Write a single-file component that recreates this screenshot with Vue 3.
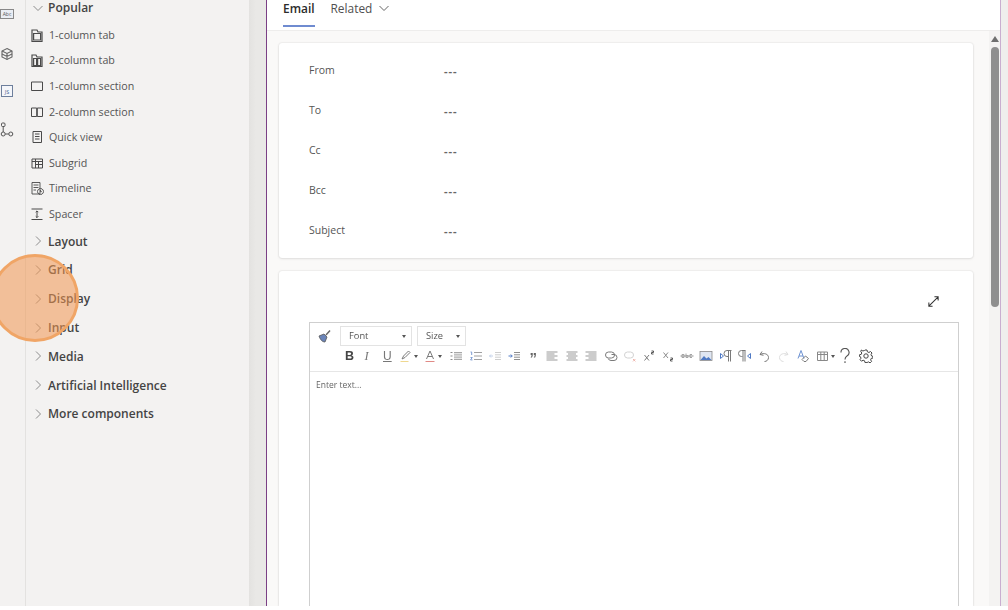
<script setup>
const items = [
  { t: '1-column tab', d: ['M2 4V2h5l1 2h4v9.500H2z', 'M3.600 5.500h7v6.500h-7z'], w: 1.200 },
  { t: '2-column tab', d: ['M2 4V2h4l1 2h5v9.500H2z', 'M3.600 5.500h3v7h-3zM7.600 5.500h3v7h-3z'], w: 1.200 },
  { t: '1-column section', d: ['M1.500 3h11v8.500h-11z'], w: 1 },
  { t: '2-column section', d: ['M1.500 3h5.200v8.500H1.500zM7.300 3h5.200v8.500H7.300z'], w: 1 },
  { t: 'Quick view', d: ['M3 1.500h8.500v11H3z', 'M5 4h4.500M5 6.500h4.500M5 9h4.500'], w: 1 },
  { t: 'Subgrid', d: ['M2 3h10.500v9H2z', 'M2 5.500h10.500M5.500 3v9M8.500 5.500V12M5.500 8.500h7'], w: 1 },
  { t: 'Timeline', d: ['M2 1.500h8v11.500H2z', 'M3.500 4h5M3.500 6.500h5M3.500 9h2.500', 'M10.500 7.500a3 3 0 1 0 .01 0zM10.500 9v1.600h1.300'], w: .9 },
  { t: 'Spacer', d: ['M1.500 2h11M1.500 12.500h11', 'M7 4v6.500M5.700 5.200L7 3.900l1.300 1.300M5.700 9.300L7 10.600l1.300-1.300'], w: 1 }
]
const groups = ['Layout', 'Grid', 'Display', 'Input', 'Media', 'Artificial Intelligence', 'More components']
const fields = ['From', 'To', 'Cc', 'Bcc', 'Subject']
const g = '#7a7a7a'
const tools = [
  { k: 't', t: 'B', c: 'bold' }, { k: 't', t: 'I', c: 'ital' }, { k: 't', t: 'U', c: 'under', w: 17.500 },
  { k: 'p', w: 24, caret: 1, p: [['M3 10l1.500-3L9.500 2l1.500 1.500L6 8.500z', g], ['M1.500 12.500h8', '#efd890']] },
  { k: 'p', w: 26, caret: 1, p: [['M3.500 10L7 2l3.500 8M5 7.500h4', g], ['M2.500 12.500h9', '#e08a86']] },
  { k: 'p', w: 20, p: [['M1.500 3.500h2M1.500 7h2M1.500 10.500h2', '#8b8b8b'], ['M5 3.500h8M5 5.200h8M5 7h8M5 8.800h8M5 10.500h8', '#a8a8a8']] },
  { k: 'p', w: 19, p: [['M1.500 3h1.200v3M1.500 8.500h1.800l-1.800 2.400h2', '#7f9dd2'], ['M5 3.500h8M5 7h8M5 10.500h8', '#a0a0a0']] },
  { k: 'p', w: 19, p: [['M5 7H1.500M3 5.500L1.500 7 3 8.500', '#c3d0e8'], ['M7 3.500h6M7 5.800h6M7 8.200h6M7 10.500h6', '#cecece']] },
  { k: 'p', w: 19, p: [['M1.500 7H5M3.800 5.500L5.300 7 3.800 8.500', '#4f79c4'], ['M7 3.500h6M7 5.800h6M7 8.200h6M7 10.500h6', '#8f8f8f']] },
  { k: 't', t: '”', c: 'quote', w: 19 },
  { k: 'p', w: 20, p: [['M1.500 3h11M1.500 5h8M1.500 7h11M1.500 9h8M1.500 11h11', '#999']] },
  { k: 'p', w: 19.500, p: [['M1.500 3h11M3 5h8M1.500 7h11M3 9h8M1.500 11h11', '#999']] },
  { k: 'p', w: 19.500, p: [['M1.500 3h11M4.500 5h8M1.500 7h11M4.500 9h8M1.500 11h11', '#999']] },
  { k: 'p', w: 19, p: [['M4.500 3h3a3 3 0 0 1 0 6h-3a3 3 0 0 1 0-6z', g], ['M7.500 5.500h2.500a3 3 0 0 1 0 6H7a3 3 0 0 1-2.800-2', g]] },
  { k: 'p', w: 19, p: [['M4.500 3h3a3 3 0 0 1 0 6h-3a3 3 0 0 1 0-6z', '#d2d2d2'], ['M10 10l2.400 2.400M12.400 10L10 12.400', '#eeb5ad']] },
  { k: 'p', w: 19, p: [['M2.500 6l4.500 5.500M7 6l-4.500 5.500', g], ['M9.500 2h2v1.500h-2V5h2', '#555']] },
  { k: 'p', w: 19, p: [['M2.500 3.500l4.500 5.500M7 3.500L2.500 9', '#8a8a8a'], ['M9.500 9h2v1.500h-2V12h2', '#555']] },
  { k: 'p', w: 19.500, p: [['M0.500 7h13', '#8f8f8f'], ['M2 8.500V5.500h2v3H2M6 4.500v4h2v-2H6M12 5.500h-2v3h2', '#a4a4a4']] },
  { k: 'img', w: 20 },
  { k: 'p', w: 19, p: [['M1.500 4.500v5L4.500 7z', '#4f79c4'], ['M9 7.500H8a3 3 0 0 1 0-6h4.500M9.500 1.500v11M11.500 1.500v11', g]] },
  { k: 'p', w: 19, p: [['M12.500 4.500v5L9.500 7z', '#4f79c4'], ['M4.500 7.500H3.500a3 3 0 0 1 0-6H7.500M5 1.500v11M7 1.500v11', g]] },
  { k: 'p', w: 19.500, p: [['M3 5.500l2-3M3 5.500l3.500.8M3.200 5.500C7 3.500 11.500 5 11.500 8.500c0 2.500-2 4-4 4', '#777']] },
  { k: 'p', w: 19, p: [['M11 5.500l-2-3M11 5.500l-3.500.8M10.800 5.500C7 3.500 2.500 5 2.500 8.500c0 2.500 2 4 4 4', '#dcdcdc']] },
  { k: 'p', w: 20, p: [['M2 9.500L5 1.500l3 8M3 7h4', '#6f93d2'], ['M6 10.500l3.500-3.500 3 2.500-2.500 3H8z', g]] },
  { k: 'p', w: 22, caret: 1, p: [['M1.500 3h10v8.500h-10zM1.500 5.500h10M4.800 3v8.500M8.200 3v8.500', '#888']] },
  { k: 'p', w: 21, tall: 1, p: [['M3.500 4a3.500 3.500 0 1 1 5.200 3c-1.200.7-1.700 1.500-1.700 3M7 11.500v1.500', '#555']] },
  { k: 'gear', w: 20 }
]
</script>

<template>
  <div class="page">
    <nav class="rail">
      <div class="rail-ico abc"><span>Abc</span></div>
      <svg class="rail-ico cube" width="14" height="14" viewBox="0 0 14 14" fill="none" stroke="#666" stroke-width="1.100"><path d="M7 1.500l5 2.500v6l-5 2.500L2 10V4z" /><path d="M2 4l5 2.500L12 4M2 7l5 2.500L12 7M7 6.500v6" /></svg>
      <div class="rail-ico js"><span>JS</span></div>
      <svg class="rail-ico flow" width="14" height="16" viewBox="0 0 14 16" fill="none" stroke="#555" stroke-width="1"><rect x="1.500" y="1" width="3.500" height="3.500" rx="1" /><circle cx="3.200" cy="12" r="2" /><circle cx="10.800" cy="12" r="2" /><path d="M3.200 4.500V10M5.200 12h3.600" /></svg>
    </nav>

    <aside class="panel">
      <div class="head popular">
        <svg class="chev" width="12" height="12" viewBox="0 0 12 12"><path d="M1.500 4l4.500 4.500L10.500 4" /></svg>
        <span>Popular</span>
      </div>
      <div class="item" v-for="it in items" :key="it.t">
        <svg width="14" height="14" viewBox="0 0 14 14" fill="none" stroke="#4a4a4a" :stroke-width="it.w">
          <path v-for="d in it.d" :key="d" :d="d" />
        </svg>
        <span>{{ it.t }}</span>
      </div>
      <div class="head group" v-for="h in groups" :key="h">
        <svg class="chev" width="12" height="12" viewBox="0 0 12 12"><path d="M4 1.500L8.500 6 4 10.500" /></svg>
        <span>{{ h }}</span>
      </div>
    </aside>

    <div class="gutter"></div>

    <main class="main">
      <header class="tabs">
        <div class="tab active">Email</div>
        <div class="tab">Related
          <svg width="12" height="12" viewBox="0 0 12 12" fill="none" stroke="#666" stroke-width="1"><path d="M1.500 4l4.500 4.500L10.500 4" /></svg>
        </div>
      </header>
      <div class="body">
        <div class="cards">
          <section class="card fields">
            <div class="row" v-for="f in fields" :key="f">
              <span class="lbl">{{ f }}</span><span class="val">---</span>
            </div>
          </section>
          <section class="card editor-card">
            <div class="expand">
              <svg width="13" height="13" viewBox="0 0 14 14" fill="none" stroke="#333" stroke-width="1.100"><path d="M2.500 11.500l9-9M8 2h4v4M2 8v4h4" /></svg>
            </div>
            <div class="editor">
              <div class="tb">
                <div class="tb-top">
                  <svg class="brush" width="16" height="16" viewBox="0 0 16 16"><path d="M2 8l5-2 3 3-2 5C5 14 3 11 2 8z" fill="#6a84b8" stroke="#555" stroke-width=".8" /><path d="M9 7l4-4.500" stroke="#666" stroke-width="1.500" /></svg>
                  <div class="sel font">Font<i></i></div>
                  <div class="sel size">Size<i></i></div>
                </div>
                <div class="tb-icons">
                  <div class="tool" v-for="(t, i) in tools" :key="i" :style="{ width: (t.w || 19.500) + 'px' }">
                    <span v-if="t.k === 't'" :class="t.c">{{ t.t }}</span>
                    <svg v-else-if="t.k === 'p'" width="14" height="14" viewBox="0 0 14 14" fill="none" stroke-width="1" :class="{ tall: t.tall }">
                      <path v-for="p in t.p" :key="p[0]" :d="p[0]" :stroke="p[1]" />
                    </svg>
                    <svg v-else-if="t.k === 'img'" width="14" height="14" viewBox="0 0 14 14"><rect x="1" y="2.500" width="12" height="9" fill="#dfe6f2" stroke="#8a8a8a" stroke-width=".8" /><path d="M1.500 11l3.500-4 2.500 2.500L9.500 8l3 3z" fill="#4f79c4" /></svg>
                    <svg v-else width="14" height="14" viewBox="0 0 14 14" fill="none" stroke="#444" stroke-width="1"><circle cx="7" cy="7" r="2.200" /><path d="M6 1h2l.4 1.800 1.500.7L11.500 2.500 13 4l-1 1.600.6 1.400 1.400.4v1.600l-1.800.4-.6 1.500 1 1.500-1.500 1.500-1.600-1-1.400.6L8 13.600H6l-.4-1.800-1.500-.6-1.600 1L1 10.700l1-1.500-.6-1.500L.4 7.400V5.800l1.800-.4.6-1.400-1-1.500L2.300 1l1.600 1 1.700-.6z" /></svg>
                    <i v-if="t.caret" class="caret"></i>
                  </div>
                </div>
              </div>
              <div class="enter">Enter text...</div>
            </div>
          </section>
        </div>
        <div class="scrollbar">
          <div class="arrow"></div>
          <div class="thumb"></div>
        </div>
      </div>
    </main>
    <div class="edge"></div>

    <div class="spot"></div>
  </div>
</template>

<style>
html, body { margin: 0; background: #fff; }
</style>

<style scoped>
.page {
  position: relative;
  display: flex;
  width: 1008px;
  height: 606px;
  overflow: hidden;
  font-family: "Open Sans", "Noto Sans", sans-serif;
  color: #333;
  filter: blur(0.45px);
}
.rail {
  width: 25px;
  flex: none;
  background: #f3f2f1;
  border-right: 1px solid #e3e2e0;
  display: flex;
  flex-direction: column;
  align-items: flex-start;
}
.rail-ico { flex: none; }
.abc {
  margin-top: 9px;
  width: 12px;
  height: 8px;
  border: 1px solid #888;
  background: #e9edf3;
  font-size: 5px;
  line-height: 8px;
  text-align: center;
  color: #555;
}
.cube { margin-top: 28px; }
.js {
  margin: 24px 0 0 1px;
  width: 10px;
  height: 10px;
  border: 1px solid #6d7f9c;
  background: #f4f6fa;
  font-size: 5.500px;
  line-height: 13px;
  text-align: center;
  color: #44628f;
}
.flow { margin-top: 25px; }
.panel {
  width: 223px;
  flex: none;
  background: #f3f2f1;
  padding-left: 6px;
  box-sizing: border-box;
}
.head {
  display: flex;
  align-items: center;
  gap: 4px;
  font-size: 12px;
  font-weight: 600;
  color: #444;
}
.chev { fill: none; stroke: #808080; stroke-width: .9; flex: none; }
.popular { height: 15px; line-height: 15px; margin-bottom: 7px; }
.group { height: 28.800px; }
.item {
  display: flex;
  align-items: center;
  gap: 5px;
  height: 25.600px;
  margin-left: -2px;
  font-size: 10.700px;
  color: #555;
}
.gutter {
  width: 17px;
  flex: none;
  background: linear-gradient(90deg, #e3e2e0, #e9e8e6 40%);
}
.main {
  width: 735px;
  flex: none;
  border-left: 1px solid #7b3f85;
  border-right: 1px solid #c9aed0;
  box-sizing: border-box;
  background: #faf9f8;
  display: flex;
  flex-direction: column;
}
.tabs {
  height: 31px;
  flex: none;
  box-sizing: border-box;
  background: #fff;
  border-bottom: 1px solid #eeedec;
  display: flex;
  gap: 16px;
  padding-left: 16px;
}
.tab {
  height: 27px;
  font-size: 11.900px;
  line-height: 16px;
  color: #505050;
  display: flex;
  gap: 6px;
  align-items: flex-start;
}
.tab svg { margin-top: 2px; }
.active {
  font-weight: 600;
  color: #2b2b2b;
  border-bottom: 2px solid #6f8bd0;
  height: 25px;
}
.body {
  flex: 1;
  min-height: 0;
  display: flex;
}
.cards {
  width: 694px;
  margin-left: 12px;
  padding-top: 12px;
  flex: none;
  display: flex;
  flex-direction: column;
  gap: 13px;
}
.card {
  background: #fff;
  border-radius: 3px;
  box-shadow: 0 0 2px rgba(0, 0, 0, .14), 0 1px 3px rgba(0, 0, 0, .08);
}
.fields {
  height: 215px;
  box-sizing: border-box;
  padding: 7px 0 0 30px;
}
.row {
  height: 40px;
  display: flex;
  align-items: center;
}
.lbl {
  width: 135px;
  font-size: 10.500px;
  color: #555;
  margin-top: -1px;
}
.val {
  font-size: 11px;
  font-weight: 700;
  color: #666;
  letter-spacing: 1px;
  margin-top: 1px;
}
.editor-card {
  flex: 1;
  min-height: 0;
  padding: 0 14px 0 30px;
  border-radius: 3px 3px 0 0;
}
.expand {
  display: flex;
  justify-content: flex-end;
  align-items: flex-end;
  padding-right: 19px;
  box-sizing: border-box;
  height: 37px;
  margin-bottom: 14px;
}
.editor {
  height: 300px;
  border: 1px solid #cfcfcf;
  border-bottom: none;
  box-sizing: border-box;
}
.tb {
  height: 49px;
  border-bottom: 1px solid #e6e6e6;
  box-sizing: border-box;
  padding: 3px 0 0 7px;
}
.tb-top {
  display: flex;
  align-items: center;
  height: 20px;
}
.brush { margin-right: 7px; }
.sel {
  height: 20px;
  box-sizing: border-box;
  border: 1px solid #e3e3e3;
  font-size: 9.300px;
  line-height: 18px;
  padding-left: 8px;
  color: #555;
  position: relative;
}
.sel i {
  position: absolute;
  right: 5px;
  top: 8px;
  border: 2px solid transparent;
  border-top: 3px solid #555;
  border-bottom: none;
}
.font { width: 72px; margin-right: 5px; }
.size { width: 49px; }
.tb-icons {
  display: flex;
  align-items: center;
  height: 20px;
  padding-left: 25px;
}
.tool {
  flex: none;
  height: 20px;
  display: flex;
  align-items: center;
  position: relative;
  font-family: "Liberation Sans", sans-serif;
}
.caret {
  position: absolute;
  left: 15px;
  top: 9px;
  border: 2px solid transparent;
  border-top: 3px solid #555;
  border-bottom: none;
}
.bold { font-weight: 700; font-size: 12.500px; color: #444; margin-left: 3px; }
.ital { font-style: italic; font-size: 12.500px; color: #777; font-family: "Liberation Serif", serif; margin-left: 3px; }
.under { text-decoration: underline; font-size: 12px; color: #777; margin-left: 2px; }
.quote { font-weight: 700; font-size: 15px; color: #666; line-height: 20px; margin: 4px 0 0 4px; }
.tall { transform: scale(1.150); }
.enter {
  padding: 7px 0 0 6px;
  font-size: 8.500px;
  line-height: 12px;
  color: #666;
}
.scrollbar {
  width: 11px;
  margin-left: 16px;
  background: #f4f3f2;
  flex: none;
  display: flex;
  flex-direction: column;
  align-items: center;
  padding-top: 5px;
}
.arrow {
  border: 4px solid transparent;
  border-bottom: 6px solid #6f6f6f;
  border-top: none;
}
.thumb {
  margin-top: 5px;
  width: 8px;
  height: 260px;
  border-radius: 4px;
  background: #8f8f8f;
}
.edge {
  flex: 1;
  background: #efeeed;
}
.spot {
  position: absolute;
  left: -9px;
  top: 254px;
  width: 88px;
  height: 88px;
  box-sizing: border-box;
  border-radius: 50%;
  border: 3px solid #f0a566;
  background: rgba(240, 150, 80, .55);
}
</style>
